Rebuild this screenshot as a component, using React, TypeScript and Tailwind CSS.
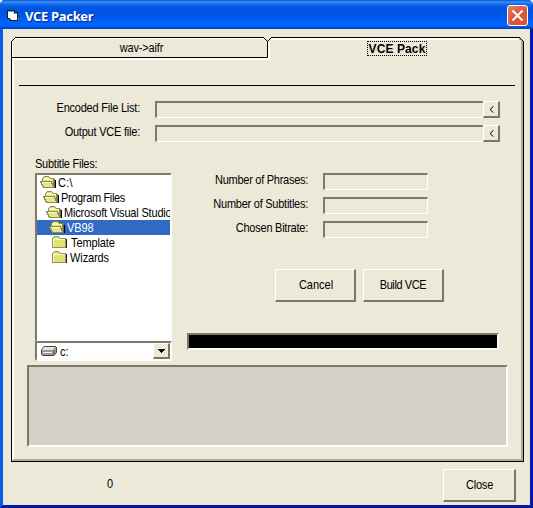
import React from "react";

const sunken =
  "border-t-2 border-l-2 border-b-2 border-r-2 border-t-[#7d7a6c] border-l-[#7d7a6c] border-b-[#fdfdf8] border-r-[#fdfdf8]";

function Text({ children, className = "" }: { children: React.ReactNode; className?: string }) {
  return <span className={`inline-block whitespace-pre scale-y-[1.1] ${className}`}>{children}</span>;
}

function Button({ children, className = "" }: { children: React.ReactNode; className?: string }) {
  return (
    <button
      className={`flex shrink-0 items-center justify-center border-t border-l border-r-2 border-b-2 border-t-white border-l-white border-r-[#7a7768] border-b-[#7a7768] bg-[#ece9d8] ${className}`}
    >
      {children}
    </button>
  );
}

function BrowseRow({ label, tracking }: { label: string; tracking: string }) {
  return (
    <div className="flex h-[17px] items-start">
      <div className="w-[126px] text-right leading-[14px]">
        <Text className={tracking}>{label}</Text>
      </div>
      <div className="ml-[15px] h-[17px] w-[328px] border-t-2 border-l-2 border-b border-t-[#7d7a6c] border-l-[#7d7a6c] border-b-white" />
      <Button className="h-[17px] w-[17px]">
        <svg width="5" height="7" viewBox="0 0 5 7" fill="none" stroke="#000">
          <path d="M4.5 0.3 L1 3.5 L4.5 6.7" />
        </svg>
      </Button>
    </div>
  );
}

function InfoRow({ label, tracking }: { label: string; tracking: string }) {
  return (
    <div className="flex h-[17px] items-start">
      <div className="w-[121px] text-right leading-[14px]">
        <Text className={tracking}>{label}</Text>
      </div>
      <div className="ml-[15px] h-[17px] w-[105px] border-t-2 border-l-2 border-r border-b border-t-[#7d7a6c] border-l-[#7d7a6c] border-r-white border-b-white" />
    </div>
  );
}

function OpenFolder() {
  return (
    <svg width="16" height="13" viewBox="0 0 16 13" className="shrink-0" shapeRendering="crispEdges">
      <path d="M4 12h12V4h-1v7H4z" fill="#000" />
      <path d="M2.5 10V2.5l2-2h4l2 2h3v8z" fill="#dede80" stroke="#8c8c50" />
      <path d="M4 2h5v1H4zM3 3h10v1H3z" fill="#fafac0" />
      <path d="M0.5 5.5h10.5l3 6H3.5z" fill="#e6e688" stroke="#8c8c50" />
      <path d="M2 6h9v1H2z" fill="#fdfdd0" />
      <path d="M14 3h1v9h-1z" fill="#6b6b45" />
    </svg>
  );
}

function ClosedFolder() {
  return (
    <svg width="16" height="13" viewBox="0 0 16 13" className="shrink-0" shapeRendering="crispEdges">
      <path d="M2 12h13V3h-1v8H2z" fill="#222" />
      <path d="M0.5 11.5v-9l2-2h4l2 2h5v9z" fill="#e2e270" stroke="#929260" />
      <path d="M1 3h12v1H2v7H1z" fill="#fbfbc8" />
    </svg>
  );
}

const folders = [
  { name: "C:\\", pad: "pl-[3px]", gap: "ml-[2px]", open: true, tracking: "tracking-[0.3px]" },
  { name: "Program Files", pad: "pl-[6px]", gap: "ml-[2px]", open: true, tracking: "tracking-[-0.35px]" },
  { name: "Microsoft Visual Studio", pad: "pl-[9px]", gap: "ml-[2px]", open: true, tracking: "tracking-[-0.18px]" },
  { name: "VB98", pad: "pl-[12px]", gap: "ml-[2px]", open: true, selected: true, tracking: "tracking-[-0.1px]" },
  { name: "Template", pad: "pl-[15px]", gap: "ml-[3px]", open: false, tracking: "tracking-[-0.1px]" },
  { name: "Wizards", pad: "pl-[15px]", gap: "ml-[2px]", open: false, tracking: "tracking-[-0.1px]" },
];

function TitleBar() {
  return (
    <header className="flex h-[29px] shrink-0 items-center bg-[linear-gradient(to_bottom,#0b50c8_0,#3a92ff_2px,#1468ee_4px,#0055e0_8px,#0054e3_15px,#0062fa_21px,#0064ff_26px,#0048c8_28px,#0540b0_29px)] pl-[7px] pr-[5px]">
      <svg width="12" height="12" viewBox="0 0 12 12" shapeRendering="crispEdges" className="mt-[2px] shrink-0">
        <path d="M0 0h8v2h3v9H3V9H0z" fill="#10202c" />
        <path d="M1 2h6v6H1z" fill="#fff" />
        <path d="M3 4h7v6H4V9H3z" fill="#fff" />
        <path d="M1 1h6v1H1zM6 3h4v1H6z" fill="#48c4c8" />
        <path d="M11 8h1v2h-1z" fill="#6b9b3a" />
      </svg>
      <span className="ml-[6px] mt-[3px] whitespace-pre font-['Open_Sans','Noto_Sans',sans-serif] text-[13px] leading-[18px] font-bold tracking-[-0.35px] text-white [text-shadow:1px_1px_1px_#06258a]">
        VCE Packer
      </span>
      <button className="ml-auto mt-[2px] flex h-[21px] w-[21px] items-center justify-center rounded-[3px] border border-white bg-[radial-gradient(circle_at_80%_85%,#e0522c,#dc5635_50%,#e4896e)]">
        <svg width="13" height="13" viewBox="0 0 13 13" stroke="#fff" strokeWidth="2.1">
          <path d="M1.5 1.5l10 10M11.5 1.5l-10 10" />
        </svg>
      </button>
    </header>
  );
}

function Tabs() {
  return (
    <div className="relative flex h-[21px] w-[513px] shrink-0">
      <div className="flex w-[257px] items-start justify-center rounded-tl-[4px] border border-black pt-[3px] pl-[4px] leading-[14px] shadow-[inset_1px_1px_0_#fff]">
        <Text className="tracking-[-0.15px]">wav-&gt;aifr</Text>
      </div>
      <div className="flex w-[256px] items-start justify-center border-t border-r border-black pt-[3px] pl-[3px] shadow-[inset_2px_2px_0_#fff,inset_-2px_0_0_#aca899]">
        <span className="flex h-[15px] w-[60px] items-center justify-center border border-dotted border-black leading-[13px] font-bold">
          <Text className="mt-px text-[12px] tracking-[0.1px] scale-y-100">VCE Pack</Text>
        </span>
      </div>
      <svg className="absolute top-0 left-0" width="5" height="5" shapeRendering="crispEdges">
        <path d="M0 0h5L0 5z" fill="#ece9d8" />
        <path d="M0 4h1v1H0zM1 3h1v1H1zM2 2h1v1H2zM3 1h1v1H3zM4 0h1v1H4z" fill="#000" />
      </svg>
      <svg className="absolute top-0 left-[252px]" width="9" height="5" shapeRendering="crispEdges">
        <path d="M0 0h9v1L5 5H4L0 1z" fill="#ece9d8" />
        <path d="M0 0h1v1H0zM1 1h1v1H1zM2 2h1v1H2zM3 3h1v1H3zM4 4h1v1H4zM5 3h1v1H5zM6 2h1v1H6zM7 1h1v1H7zM8 0h1v1H8z" fill="#000" />
      </svg>
      <svg className="absolute top-0 right-0" width="5" height="5" shapeRendering="crispEdges">
        <path d="M0 0h5v5H3L0 2z" fill="#ece9d8" />
        <path d="M0 1h1v1h1v1h1v1h1v1H2V3H0z" fill="#aca899" />
        <path d="M0 0h1v1H0zM1 1h1v1H1zM2 2h1v1H2zM3 3h1v1H3zM4 4h1v1H4z" fill="#000" />
      </svg>
    </div>
  );
}

function FileBrowser() {
  return (
    <div className="w-[137px]">
      <div className={`h-[169px] w-[137px] overflow-hidden bg-white ${sunken}`}>
        {folders.map((f) => (
          <div
            key={f.name}
            className={`flex h-[15px] items-center leading-[14px] ${f.pad} ${f.selected ? "bg-[#316ac5] text-white" : ""}`}
          >
            {f.open ? <OpenFolder /> : <ClosedFolder />}
            <Text className={`${f.gap} ${f.tracking}`}>{f.name}</Text>
          </div>
        ))}
      </div>
      <div className={`-mt-px flex h-[20px] w-[137px] items-center bg-white pl-[4px] ${sunken}`}>
        <svg width="16" height="10" viewBox="0 0 16 10">
          <path d="M0.5 4l2.5-3.5h11.5l1 1v5L13 9.5H1.5l-1-1z" fill="#9a9a9a" stroke="#444" />
          <path d="M1 4l2-3h11l-2 3z" fill="#e4e4e4" />
          <path d="M2 6.5h9" stroke="#eee" />
          <path d="M13 4v5" stroke="#555" />
        </svg>
        <Text className="mt-px ml-[3px] leading-[14px]">c:</Text>
        <Button className="ml-auto h-[16px] w-[17px]">
          <svg width="7" height="4" shapeRendering="crispEdges">
            <path d="M0 0h7v1H6v1H5v1H4v1H3V3H2V2H1V1H0z" />
          </svg>
        </Button>
      </div>
    </div>
  );
}

export default function App() {
  return (
    <div className="flex h-[508px] w-[533px] flex-col overflow-hidden rounded-t-[5px] bg-[#0831d9] font-['Liberation_Sans',Arial,sans-serif] text-[11px] text-black">
      <TitleBar />
      <div className="flex h-[479px] border-l-3 border-r-3 border-b-3 border-l-[#0a5be8] border-r-[#0019a8] border-b-[#001ba0]">
        <div className="flex w-[527px] flex-col bg-[#ece9d8] pt-[8px] pl-[8px]">
          <Tabs />
          <main className="h-[404px] w-[513px] shrink-0 border-r border-b border-l border-black">
            <div className="h-[403px] border-r-2 border-b-2 border-l-2 border-l-white border-r-[#aca899] border-b-[#aca899]">
              <div className="h-[2px] w-[256px] bg-white" />
              <div className="mt-[25px] ml-[5px] h-px w-[496px] bg-black" />
              <div className="mt-[15px] flex flex-col gap-[7px]">
                <BrowseRow label="Encoded File List:" tracking="tracking-[-0.22px]" />
                <BrowseRow label="Output VCE file:" tracking="tracking-[-0.22px]" />
              </div>
              <div className="mt-[15px] ml-[21px] h-[16px] leading-[14px]">
                <Text className="tracking-[-0.25px]">Subtitle Files:</Text>
              </div>
              <div className="ml-[21px] flex">
                <FileBrowser />
                <div className="ml-[15px]">
                  <div className="flex flex-col gap-[7px]">
                    <InfoRow label="Number of Phrases:" tracking="tracking-[-0.27px]" />
                    <InfoRow label="Number of Subtitles:" tracking="tracking-[-0.25px]" />
                    <InfoRow label="Chosen Bitrate:" tracking="tracking-[-0.24px]" />
                  </div>
                  <div className="mt-[31px] ml-[88px] flex gap-[7px] leading-[14px]">
                    <Button className="h-[33px] w-[81px]">
                      <Text className="ml-[2px]">Cancel</Text>
                    </Button>
                    <Button className="h-[33px] w-[81px]">
                      <Text className="tracking-[-0.4px]">Build VCE</Text>
                    </Button>
                  </div>
                  <div className={`mt-[31px] h-[17px] w-[312px] bg-black ${sunken}`} />
                </div>
              </div>
              <div className={`mt-[4px] ml-[13px] h-[82px] w-[481px] bg-[#d4d0c8] ${sunken}`} />
            </div>
          </main>
          <footer className="flex items-start pt-[7px] leading-[14px]">
            <Text className="mt-[8px] ml-[96px]">0</Text>
            <Button className="ml-auto mr-[14px] h-[33px] w-[73px]">
              <Text className="ml-px tracking-[-0.2px]">Close</Text>
            </Button>
          </footer>
        </div>
      </div>
    </div>
  );
}
